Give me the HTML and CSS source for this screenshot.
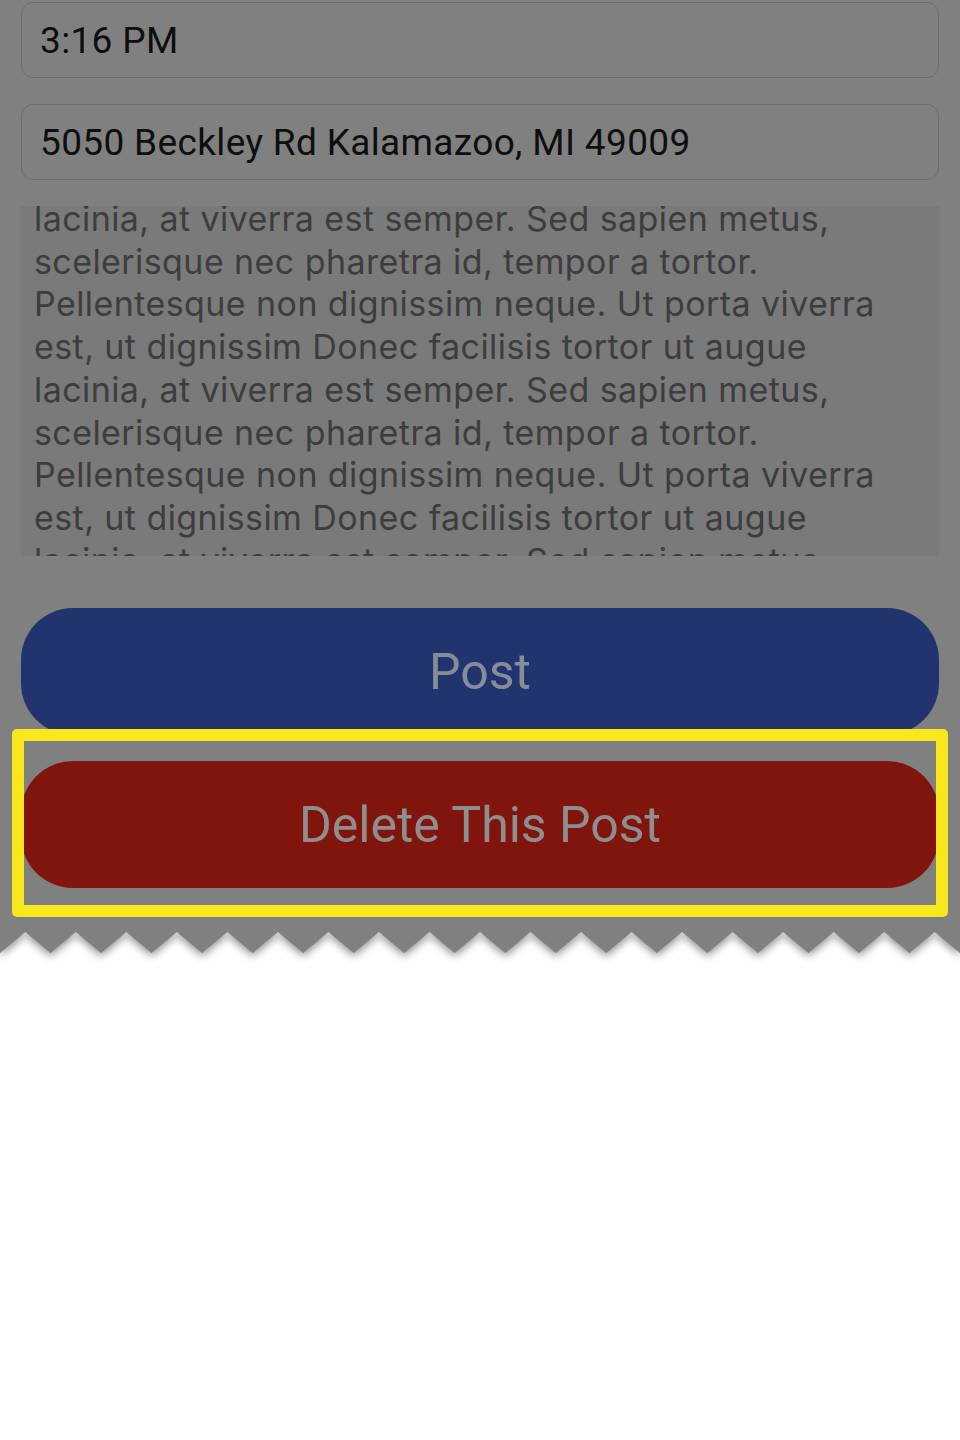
FILE: index.html
```html
<!DOCTYPE html>
<html>
<head>
<meta charset="utf-8">
<link rel="stylesheet" href="styles.css">
</head>
<body>
<div class="page">
  <div class="screen">
    <div class="field">3:16 PM</div>
    <div class="field field-second">5050 Beckley Rd Kalamazoo, MI 49009</div>
    <div class="textarea">
      <div class="textarea-inner">
        <div class="line">lacinia, at viverra est semper. Sed sapien metus,</div>
        <div class="line">scelerisque nec pharetra id, tempor a tortor.</div>
        <div class="line">Pellentesque non dignissim neque. Ut porta viverra</div>
        <div class="line">est, ut dignissim Donec facilisis tortor ut augue</div>
        <div class="line">lacinia, at viverra est semper. Sed sapien metus,</div>
        <div class="line">scelerisque nec pharetra id, tempor a tortor.</div>
        <div class="line">Pellentesque non dignissim neque. Ut porta viverra</div>
        <div class="line">est, ut dignissim Donec facilisis tortor ut augue</div>
        <div class="line">lacinia, at viverra est semper. Sed sapien metus,</div>
      </div>
    </div>
    <div class="btn btn-post">Post</div>
    <div class="btn btn-delete">Delete This Post</div>
    <div class="highlight"></div>
  </div>
  <svg class="tear" width="960" height="50" viewBox="0 0 960 50" xmlns="http://www.w3.org/2000/svg">
    <defs>
      <filter id="blur" x="-10%" y="-50%" width="120%" height="200%">
        <feGaussianBlur stdDeviation="4.5"/>
      </filter>
    </defs>
    <polygon class="tear-shadow" filter="url(#blur)" points="0,0 960,0 960,24 934.7,3 909.5,24 884.2,3 858.9,24 833.7,3 808.4,24 783.2,3 757.9,24 732.6,3 707.4,24 682.1,3 656.8,24 631.6,3 606.3,24 581.1,3 555.8,24 530.5,3 505.3,24 480,3 454.7,24 429.5,3 404.2,24 378.9,3 353.7,24 328.4,3 303.2,24 277.9,3 252.6,24 227.4,3 202.1,24 176.8,3 151.6,24 126.3,3 101.1,24 75.8,3 50.5,24 25.3,3 0,24"/>
    <polygon class="tear-edge" points="0,0 960,0 960,21 934.7,0 909.5,21 884.2,0 858.9,21 833.7,0 808.4,21 783.2,0 757.9,21 732.6,0 707.4,21 682.1,0 656.8,21 631.6,0 606.3,21 581.1,0 555.8,21 530.5,0 505.3,21 480,0 454.7,21 429.5,0 404.2,21 378.9,0 353.7,21 328.4,0 303.2,21 277.9,0 252.6,21 227.4,0 202.1,21 176.8,0 151.6,21 126.3,0 101.1,21 75.8,0 50.5,21 25.3,0 0,21"/>
  </svg>
</div>
</body>
</html>
```

FILE: styles.css
```css
html, body {
  margin: 0;
  padding: 0;
  background: #ffffff;
}

body {
  font-family: Roboto, "Noto Sans", "Liberation Sans", sans-serif;
}

.page {
  width: 960px;
}

.screen {
  position: relative;
  background: #808080;
  height: 932px;
  padding: 2px 21px 0 21px;
  box-sizing: border-box;
  display: flex;
  flex-direction: column;
}

.field {
  height: 76px;
  border: 1px solid #6c6c6c;
  border-radius: 12px;
  box-sizing: border-box;
  padding: 0 18px;
  display: flex;
  align-items: center;
  font-size: 37px;
  letter-spacing: 0.35px;
  color: #0e0e0e;
}

.field-second {
  margin-top: 26px;
}

.textarea {
  margin-top: 26px;
  height: 350px;
  background: #7a7a7a;
  overflow: hidden;
  padding: 0 13px;
}

.textarea-inner {
  margin-top: -8px;
}

.line {
  font-family: Inter, Roboto, "Liberation Sans", sans-serif;
  font-size: 34px;
  letter-spacing: 0.42px;
  line-height: 42.7px;
  white-space: nowrap;
  color: #3d3d3d;
}

.btn {
  height: 127px;
  border-radius: 52px;
  display: flex;
  align-items: center;
  justify-content: center;
  font-size: 50px;
}

.btn-post {
  margin-top: 52px;
  background: #22346e;
  color: #878c99;
}

.btn-delete {
  margin-top: 26px;
  background: #80150e;
  color: #8e8e8e;
}

.highlight {
  position: absolute;
  left: 12px;
  top: 729px;
  width: 936px;
  height: 188px;
  box-sizing: border-box;
  border: 12px solid #f8e71d;
  border-radius: 5px;
}

.tear {
  display: block;
}

.tear-shadow {
  fill: rgba(0, 0, 0, 0.45);
}

.tear-edge {
  fill: #808080;
}
```
